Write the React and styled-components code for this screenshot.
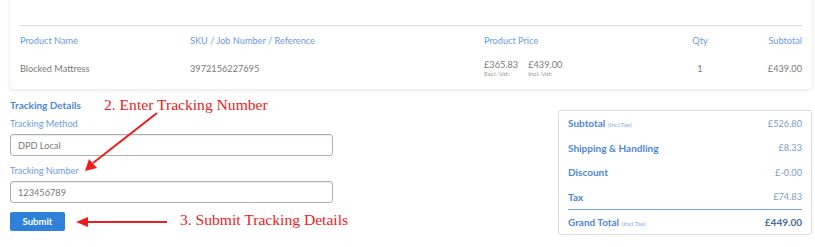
import React from "react";
import styled, { createGlobalStyle } from "styled-components";

const GlobalStyle = createGlobalStyle`
  body {
    margin: 0;
    background: #ffffff;
    font-family: Lato, "Open Sans", sans-serif;
  }
`;

const Page = styled.div`
  position: relative;
  width: 815px;
  height: 247px;
  overflow: hidden;
  padding: 0 3px 0 10px;
  box-sizing: border-box;
`;

const ItemsCard = styled.div`
  margin-top: -12px;
  padding: 37px 10px 7px;
  background: #fff;
  border-radius: 4px;
  box-shadow: 0 1px 4px rgba(0, 0, 0, 0.12);
`;

const Rule = styled.div`
  border-top: 1px solid #dcdcdc;
`;

const Row = styled.div`
  display: grid;
  grid-template-columns: 170px 294px 180px 72px 66px;
  align-items: center;
  height: 28px;
  font-size: 9.2px;
  color: ${(p) => (p.head ? "#6b9be6" : "#7a7a7a")};
`;

const Cell = styled.div`
  text-align: ${(p) => p.align || "left"};
  white-space: nowrap;
`;

const PriceGroup = styled.div`
  display: flex;
  gap: 10px;
`;

const Price = styled.div`
  display: flex;
  flex-direction: column;
  line-height: 11px;
  small {
    font-size: 6.5px;
    line-height: 8px;
    color: #999;
  }
`;

const Bottom = styled.div`
  display: flex;
  justify-content: space-between;
  align-items: flex-start;
  margin-top: 9px;
`;

const TrackingForm = styled.div`
  width: 323px;
  display: flex;
  flex-direction: column;
`;

const Title = styled.div`
  font-size: 10px;
  font-weight: 700;
  line-height: 14px;
  color: #4f86da;
`;

const Label = styled.div`
  font-size: 9.2px;
  line-height: 14px;
  color: #6b9be6;
  margin-top: ${(p) => p.top}px;
`;

const Input = styled.div`
  margin-top: 3px;
  height: 22px;
  border: 1px solid #b0b0b0;
  border-radius: 3px;
  box-shadow: inset 0 1px 1px rgba(0, 0, 0, 0.08);
  box-sizing: border-box;
  padding: 0 7px;
  display: flex;
  align-items: center;
  font-size: 9.2px;
  color: #7a7a7a;
`;

const SubmitButton = styled.button`
  margin-top: 9px;
  width: 55px;
  height: 19px;
  border: none;
  border-radius: 2px;
  background: #2f80d8;
  color: #fff;
  font-family: inherit;
  font-size: 9.5px;
  font-weight: 700;
  padding: 0;
  cursor: pointer;
`;

const Summary = styled.div`
  margin-top: 12px;
  width: 254px;
  height: 125px;
  box-sizing: border-box;
  border: 1px solid #dcdcdc;
  border-radius: 3px;
  padding: 0 9px;
`;

const SumRow = styled.div`
  display: flex;
  justify-content: space-between;
  align-items: center;
  height: 24.5px;
  font-size: 10px;
  border-bottom: ${(p) => (p.ruled ? "1px solid #74a6e6" : "none")};
  span:first-child {
    font-weight: 700;
    color: #4f86da;
  }
  span:last-child {
    font-size: ${(p) => (p.total ? 10 : 9.2)}px;
    color: ${(p) => (p.total ? "#4a6c9e" : "#7b9ccc")};
    font-weight: ${(p) => (p.total ? 700 : 400)};
  }
  small {
    font-size: 6.5px;
    font-weight: 400;
    color: #8aa9dc;
  }
`;

const Note = styled.div`
  position: absolute;
  left: ${(p) => p.x}px;
  top: ${(p) => p.y}px;
  font-family: "Liberation Serif", serif;
  font-size: 15.6px;
  color: #ee1c1c;
  white-space: nowrap;
`;

const Arrows = styled.svg`
  position: absolute;
  left: 0;
  top: 0;
  pointer-events: none;
`;

const summary = [
  { label: "Subtotal", note: "(Incl.Tax)", value: "£526.80" },
  { label: "Shipping & Handling", value: "£8.33" },
  { label: "Discount", value: "£-0.00" },
  { label: "Tax", value: "£74.83", ruled: true },
  { label: "Grand Total", note: "(Incl.Tax)", value: "£449.00", total: true },
];

export default function App() {
  return (
    <>
      <GlobalStyle />
      <Page>
        <ItemsCard>
          <Rule />
          <Row head>
            <Cell>Product Name</Cell>
            <Cell>SKU / Job Number / Reference</Cell>
            <Cell>Product Price</Cell>
            <Cell align="center">Qty</Cell>
            <Cell align="right">Subtotal</Cell>
          </Row>
          <Row>
            <Cell>Blocked Mattress</Cell>
            <Cell>3972156227695</Cell>
            <PriceGroup>
              <Price>
                £365.83<small>Excl. Vat:</small>
              </Price>
              <Price>
                £439.00<small>Incl. Vat:</small>
              </Price>
            </PriceGroup>
            <Cell align="center">1</Cell>
            <Cell align="right">£439.00</Cell>
          </Row>
        </ItemsCard>

        <Bottom>
          <TrackingForm>
            <Title>Tracking Details</Title>
            <Label top={5}>Tracking Method</Label>
            <Input>DPD Local</Input>
            <Label top={8}>Tracking Number</Label>
            <Input>123456789</Input>
            <div>
              <SubmitButton>Submit</SubmitButton>
            </div>
          </TrackingForm>

          <Summary>
            {summary.map((s) => (
              <SumRow key={s.label} ruled={s.ruled} total={s.total}>
                <span>
                  {s.label} {s.note && <small>{s.note}</small>}
                </span>
                <span>{s.value}</span>
              </SumRow>
            ))}
          </Summary>
        </Bottom>

        <Note x={104} y={96}>2. Enter Tracking Number</Note>
        <Note x={180} y={211}>3. Submit Tracking Details</Note>
        <Arrows width="815" height="247">
          <line x1="157" y1="113" x2="93" y2="163" stroke="#ee1c1c" strokeWidth="2" />
          <polygon points="85,171 89,159 97,168" fill="#ee1c1c" />
          <line x1="167" y1="222" x2="86" y2="222" stroke="#ee1c1c" strokeWidth="2" />
          <polygon points="76,222 88,217 88,227" fill="#ee1c1c" />
        </Arrows>
      </Page>
    </>
  );
}
